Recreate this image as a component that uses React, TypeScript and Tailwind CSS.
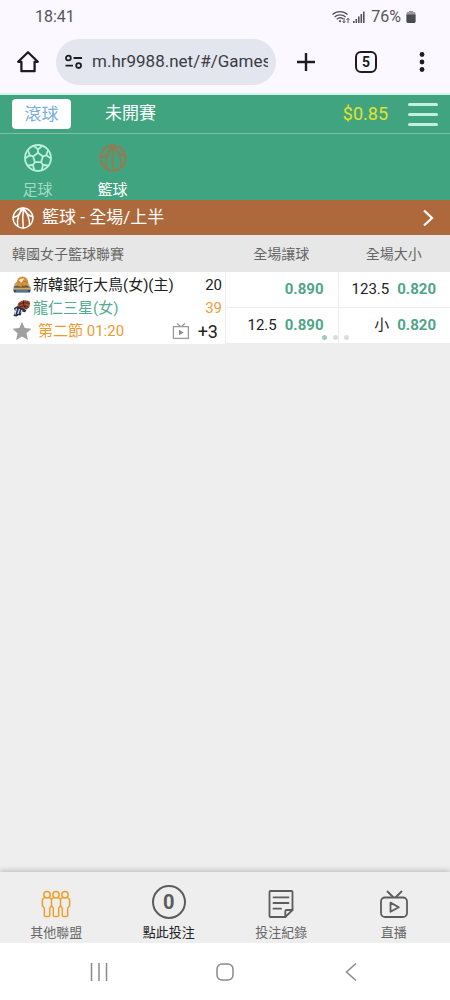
import { useState } from "react"
import type { ReactNode } from "react"

function HomeIcon() {
  return (
    <svg viewBox="0 0 24 24" className="w-6 h-6" fill="none" stroke="currentColor" strokeWidth="2.3" strokeLinejoin="round">
      <path d="M12 2.2 2.2 11.8h3.2v9.4h13.2v-9.4h3.2z" />
    </svg>
  )
}

function SiteInfoIcon() {
  return (
    <svg viewBox="0 0 20 16" className="w-5 h-4 shrink-0" fill="none" stroke="currentColor" strokeWidth="1.8">
      <circle cx="4.4" cy="4" r="2.4" />
      <path d="M9.5 4H18M1.5 11.6H9" />
      <circle cx="14.6" cy="11.6" r="2.4" />
    </svg>
  )
}

function WifiIcon() {
  return (
    <svg viewBox="0 0 20 16" className="w-5 h-4" fill="none" stroke="#55555a" strokeWidth="1.4">
      <path d="M1.5 5.6c4-4 11-4 15 0M3.6 8c3-2.8 8-2.8 11 0M5.8 10.3c1.8-1.6 4.6-1.6 6.3-.4" />
      <circle cx="9" cy="12.2" r="1.1" fill="#55555a" stroke="none" />
      <path d="M13 9v4.5M11.6 12.2l1.4 1.6 1.4-1.6M17 14V9.5M15.6 10.8 17 9.2l1.4 1.6" strokeWidth="1" />
    </svg>
  )
}

function SignalIcon() {
  return (
    <svg viewBox="0 0 12 14" className="w-3 h-4" fill="#55555a">
      <path d="M0 11h1.6v2H0zM2.5 9h1.6v4H2.5zM5 6.5h1.6V13H5zM7.5 4h1.6v9H7.5zM10 1.5h1.6V13H10z" />
    </svg>
  )
}

function BatteryIcon() {
  return (
    <svg viewBox="0 0 12 14" className="w-3 h-3.5">
      <path d="M4 1h4v2H4z" fill="#8d8d92" />
      <rect x="1.5" y="2" width="9" height="11" rx="1.4" fill="#9b9ba0" />
      <path d="M1.5 4.6h9v7A1.4 1.4 0 0 1 9.1 13H2.9a1.4 1.4 0 0 1-1.400-1.400z" fill="#4b4b50" />
    </svg>
  )
}

function FootballIcon({ className }: { className?: string }) {
  return (
    <svg viewBox="0 0 28 28" className={className} fill="none" stroke="currentColor" strokeWidth="1.8" strokeLinejoin="round">
      <circle cx="14" cy="14" r="13" />
      <path d="M14 8.8l4.9 3.6-1.8 5.8h-6.2l-1.8-5.8z" />
      <path d="M14 8.8V5.400M18.900 12.400l3.300-1.100M17.100 18.200l2 2.800M10.900 18.200l-2 2.800M9.100 12.400l-3.300-1.100" />
      <path d="M9.600 1.800L14 5.400l4.400-3.600M24.200 6l-2 5.300 4.800 3.200M24.800 21.300l-5.700-.3-1.500 5.500M10.400 26.500L8.900 21l-5.700.3M1 14.500l4.800-3.200L3.800 6" />
    </svg>
  )
}

function BasketballIcon({ className }: { className?: string }) {
  return (
    <svg viewBox="0 0 24 24" className={className} fill="none" stroke="currentColor" strokeLinecap="round">
      <circle cx="12" cy="12" r="10.8" />
      <path d="M12.5 1.5C11.6 8 11.4 16 12.3 22.6" />
      <path d="M12.5 1.5C7.5 6 5.2 13.5 6.3 21" />
      <path d="M12.5 1.5c4.3 5 6.800 11.500 6.600 18.600" />
      <path d="M1.400 11.400C6 10.500 9.300 7.500 10 1.600" />
      <path d="M12.500 1.500c2.500 5.300 6 8.200 10.200 9.200" />
    </svg>
  )
}

function EagleLogo() {
  return (
    <svg viewBox="0 0 20 18" className="w-5 h-5 shrink-0">
      <path d="M1.500 12c0-3 1.500-5.500 4-7L15 5l4 7z" fill="#b3a88f" />
      <circle cx="10.500" cy="6.400" r="5.800" fill="#dd9236" />
      <path d="M5.500 7c3-2.500 7-2.500 10.300 0M10.500 1.300c-1.300 3-1 7 .5 10" stroke="#a7621f" strokeWidth=".7" fill="none" />
      <path d="M7 4.500c1-1.800 3-2.500 5-1.800L9.500 7z" fill="#fdf0d0" />
      <path d="M2 10.500l3.500-1 3 1.200 3-1 3-.5 3.500 2-1 1H2z" fill="#6b5a44" />
      <path d="M1 11.800h18l-.6 1.800H1.600z" fill="#d9aa3a" />
      <path d="M1.200 13.400h17.600l-.8 3H2z" fill="#2b4a78" />
      <path d="M4 15h12" stroke="#8fadd0" strokeWidth=".8" />
    </svg>
  )
}

function SamsungLogo() {
  return (
    <svg viewBox="0 0 20 18" className="w-5 h-5 shrink-0">
      <path d="M6 4.500C8.500 1.500 13 .5 17.500 2.200c1.200 3.500 0 7-3.500 8.300-3 .7-7-1-8.500-3.500z" fill="#a4502f" />
      <path d="M7 5.500c3.500-2 7-2.300 10.500-1M11.500 1.600c-.5 3 .3 6 3 8.500M7.500 8c3.500-1.500 6-1.500 9 .3" stroke="#2b1c24" strokeWidth=".8" fill="none" />
      <path d="M2 9l3.500-2 4.500 2 4.500 2.500-1.500 1.700-3-.7-1.500 4-2-.3-2 1.300-3-.6 1.500-5z" fill="#26304e" />
      <path d="M4.500 9.500l-1.700 6M7.500 10l-1.700 5M10 11l-1 3" stroke="#dfe4ef" strokeWidth="1.200" />
    </svg>
  )
}

function StarIcon() {
  return (
    <svg viewBox="0 0 20 20" className="w-5 h-5" fill="#9f9f9f">
      <path d="M10 .8l2.700 6.300 6.800.6-5.100 4.500 1.500 6.700L10 15.400l-5.900 3.500 1.500-6.700L.5 7.700l6.800-.6z" />
    </svg>
  )
}

function TvIcon({ className }: { className?: string }) {
  return (
    <svg viewBox="0 0 28 28" className={className} fill="none" stroke="currentColor" strokeWidth="1.8" strokeLinecap="round" strokeLinejoin="round">
      <rect x="1" y="7.500" width="26" height="19.500" rx="4" />
      <path d="M7.500 1.500l5.500 5.500M21.500 1.500L16 7" />
      <path d="M10.500 12.600v9.200l8.300-4.600z" />
    </svg>
  )
}

function SmallTvIcon() {
  return (
    <svg viewBox="0 0 18 18" className="w-[18px] h-[18px]" fill="none" stroke="#9a9a9a" strokeWidth="1.3">
      <rect x="1.400" y="4.600" width="15" height="11.800" />
      <path d="M5 1.500l3.500 3M13 1.500l-3.500 3" />
      <path d="M7 7.800v5.400l4.600-2.700z" fill="#8a8a8a" stroke="none" />
    </svg>
  )
}

function PeopleIcon() {
  return (
    <svg viewBox="0 0 30 28" className="w-[30px] h-7" fill="none" stroke="#f0a02a" strokeWidth="1.5" strokeLinejoin="round">
      <circle cx="6" cy="4.800" r="3.200" />
      <circle cx="15" cy="4.800" r="3.200" />
      <circle cx="24" cy="4.800" r="3.200" />
      <path d="M3.500 7.500L1.400 9.300v6.500L3.300 18v7.600q0 1 1 1h3.400q1 0 1-1V18l1.800-2.200L12.300 18v7.600q0 1 1 1h3.400q1 0 1-1V18l1.800-2.200 1.800 2.200v7.600q0 1 1 1h3.400q1 0 1-1V18l1.900-2.200V9.300l-2.100-1.800" />
      <path d="M8.500 7.500l2 1.800v6.500M12.500 7.500l-2 1.800M17.500 7.500l2 1.800v6.500M21.500 7.500l-2 1.800" />
    </svg>
  )
}

function RecordIcon() {
  return (
    <svg viewBox="0 0 26 28" className="w-[26px] h-7" fill="none" stroke="currentColor" strokeWidth="1.8" strokeLinecap="round" strokeLinejoin="round">
      <path d="M2.500 1h21q1 0 1 1v18l-7.200 7H2.500q-1 0-1-1V2q0-1 1-1z" />
      <path d="M17.300 27v-5.500q0-1.500 1.500-1.500h5.700M5.500 7.300h15M5.500 13h15M5.500 18.700H13" />
    </svg>
  )
}

const odds = [
  { handicap: "", handicapOdds: "0.890", total: "123.5", totalOdds: "0.820" },
  { handicap: "12.5", handicapOdds: "0.890", total: "小", totalOdds: "0.820" },
]

function OddsCell({ label, value }: { label: string; value: string }) {
  return (
    <td className="border-l border-b border-[#ededed] p-0">
      <button className="flex w-full h-[35px] items-center justify-end gap-2 pr-3.5 text-[15px]">
        <span className="text-[#222]">{label}</span>
        <span className="font-bold text-[#4fa588]">{value}</span>
      </button>
    </td>
  )
}

function NavItem({ icon, label, active }: { icon: ReactNode; label: string; active?: boolean }) {
  return (
    <button className={`flex flex-1 flex-col items-center ${active ? "text-[#222]" : "text-[#666]"}`}>
      <span className="flex h-[38px] items-center text-[#5c5c5c]">{icon}</span>
      <span className="text-[13px] leading-5">{label}</span>
    </button>
  )
}

export default function App() {
  const [url, setUrl] = useState("m.hr9988.net/#/Games")

  return (
    <div className="min-h-screen flex flex-col bg-[#eeeeee] font-['Roboto','Noto_Sans_CJK_TC',sans-serif]">
      {/* Phone status bar */}
      <div className="flex h-[34px] items-center justify-between bg-[#fbf9ff] pl-[35px] pr-[33px] text-base text-[#55555a]">
        <span>18:41</span>
        <div className="flex items-center">
          <WifiIcon />
          <span className="pl-0.5 pr-1.5">
            <SignalIcon />
          </span>
          <span className="pr-1">76%</span>
          <BatteryIcon />
        </div>
      </div>

      {/* Browser toolbar */}
      <div className="flex h-[61px] items-center border-b-2 border-[#d3f3ea] bg-[#fbf9ff] pb-1 pr-4 text-[#1d1c22]">
        <button className="flex w-14 justify-center" aria-label="Home">
          <HomeIcon />
        </button>
        <label className="flex h-[46px] min-w-0 flex-1 items-center gap-2 rounded-full bg-[#e4e6ef] px-2">
          <SiteInfoIcon />
          <input
            className="min-w-0 flex-1 bg-transparent text-[17px] text-[#3b3c43] outline-none"
            aria-label="Address"
            value={url}
            onChange={(e) => setUrl(e.target.value)}
          />
        </label>
        <button className="flex w-[60px] justify-center" aria-label="New tab">
          <svg viewBox="0 0 20 20" className="w-5 h-5" stroke="currentColor" strokeWidth="2.4">
            <path d="M10 1v18M1 10h18" />
          </svg>
        </button>
        <button className="flex w-[60px] justify-center">
          <span className="flex h-[22px] w-[22px] items-center justify-center rounded-md border-2 border-[#1d1c22] text-sm font-bold leading-none">
            5
          </span>
        </button>
        <button className="ml-3.5 flex w-6 justify-center" aria-label="Menu">
          <svg viewBox="0 0 6 20" className="h-5 w-1.5" fill="currentColor">
            <circle cx="3" cy="2.500" r="2.400" />
            <circle cx="3" cy="10" r="2.400" />
            <circle cx="3" cy="17.500" r="2.400" />
          </svg>
        </button>
      </div>

      {/* Game header */}
      <header className="bg-[#41a481] text-white">
        <div className="flex h-[39px] items-center border-b border-[#7cc2a8] px-3">
          <button className="h-[30px] w-[59px] rounded-sm bg-white text-[17px] leading-none text-[#7aaede]">滾球</button>
          <button className="ml-[34px] text-[17px]">未開賽</button>
          <span className="ml-auto text-lg text-[#e2e22a]">$0.85</span>
          <button className="ml-5 flex w-[30px] flex-col gap-[7px]" aria-label="Open menu">
            <span className="h-[3px] w-full rounded-full bg-[#c3f0df]" />
            <span className="h-[3px] w-full rounded-full bg-[#c3f0df]" />
            <span className="h-[3px] w-full rounded-full bg-[#c3f0df]" />
          </button>
        </div>
        <nav className="flex h-[66px] pt-2.5 text-[15px] leading-5">
          <button className="flex w-[75px] flex-col items-center gap-2 text-[#a0dcc5]">
            <FootballIcon className="w-7 h-7 text-[#b9f0dc]" />
            <span>足球</span>
          </button>
          <button className="flex w-[75px] flex-col items-center gap-2">
            <BasketballIcon className="w-7 h-7 stroke-2 text-[#8a8058]" />
            <span>籃球</span>
          </button>
        </nav>
      </header>

      <button className="flex h-[35px] items-center gap-2 bg-[#ad693b] pl-3 pr-4 text-[17px] text-white">
        <BasketballIcon className="w-[22px] h-[22px] stroke-[1.6]" />
        <span>籃球 - 全場/上半</span>
        <svg viewBox="0 0 12 18" className="ml-auto w-3 h-[18px]" fill="none" stroke="currentColor" strokeWidth="2.2">
          <path d="M2 1.500l8 7.500-8 7.500" />
        </svg>
      </button>

      {/* Odds */}
      <div className="relative">
        <table className="w-full table-fixed border-separate border-spacing-0 bg-white">
          <thead className="bg-[#e7e7e7] text-sm text-[#666]">
            <tr className="h-[37px]">
              <th className="w-1/2 p-0 pl-3 text-left font-normal">韓國女子籃球聯賽</th>
              <th className="w-1/4 p-0 font-normal">全場讓球</th>
              <th className="w-1/4 p-0 font-normal">全場大小</th>
            </tr>
          </thead>
          <tbody>
            {odds.map((row, i) => (
              <tr key={i}>
                {i === 0 && (
                  <td rowSpan={2} className="p-0 pl-3 pr-[3px] text-[15px] leading-[23px] text-[#222]">
                    <div className="flex items-center">
                      <EagleLogo />
                      <span className="pl-px">新韓銀行大鳥(女)(主)</span>
                      <span className="ml-auto">20</span>
                    </div>
                    <div className="flex items-center">
                      <SamsungLogo />
                      <span className="pl-px text-[#55ac8e]">龍仁三星(女)</span>
                      <span className="ml-auto text-[#ee9d3c]">39</span>
                    </div>
                    <div className="flex items-center">
                      <button aria-label="Favorite">
                        <StarIcon />
                      </button>
                      <span className="pl-1.5 text-[#ee9a2e]">第二節 01:20</span>
                      <button className="ml-auto" aria-label="Live">
                        <SmallTvIcon />
                      </button>
                      <button className="pl-2 pr-1 text-lg leading-[23px]">+3</button>
                    </div>
                  </td>
                )}
                <OddsCell label={row.handicap} value={row.handicapOdds} />
                <OddsCell label={row.total} value={row.totalOdds} />
              </tr>
            ))}
          </tbody>
        </table>
        <div className="absolute bottom-1 left-1/2 right-0 flex justify-center gap-1.5 pr-1">
          <span className="h-[5px] w-[5px] rounded-full bg-[#9ccdbb]" />
          <span className="h-[5px] w-[5px] rounded-full bg-[#dadddf]" />
          <span className="h-[5px] w-[5px] rounded-full bg-[#dadddf]" />
        </div>
      </div>

      {/* Bottom navigation */}
      <nav className="mt-auto flex h-[71px] bg-[#eeeeee] pt-[13px] shadow-[0_-2px_5px_rgba(0,0,0,0.18)]">
        <NavItem icon={<PeopleIcon />} label="其他聯盟" />
        <NavItem
          icon={
            <span className="mb-1 flex h-[34px] w-[34px] items-center justify-center rounded-full border-2 border-[#5c5c5c] text-xl font-bold leading-none">
              0
            </span>
          }
          label="點此投注"
          active
        />
        <NavItem icon={<RecordIcon />} label="投注紀錄" />
        <NavItem icon={<TvIcon className="w-7 h-7" />} label="直播" />
      </nav>

      {/* Android buttons */}
      <div className="flex h-[57px] items-center justify-around bg-white px-9 text-[#8a8a8a]">
        <button aria-label="Recents">
          <svg viewBox="0 0 18 18" className="w-[18px] h-[18px]" stroke="currentColor" strokeWidth="1.500">
            <path d="M1.500 0v18M9 0v18M16.500 0v18" />
          </svg>
        </button>
        <button aria-label="Home screen">
          <svg viewBox="0 0 18 18" className="w-[18px] h-[18px]" fill="none" stroke="currentColor" strokeWidth="1.500">
            <rect x="1" y="1" width="16" height="16" rx="5" />
          </svg>
        </button>
        <button aria-label="Back">
          <svg viewBox="0 0 18 18" className="w-[18px] h-[18px]" fill="none" stroke="currentColor" strokeWidth="1.500">
            <path d="M14 .5L4.500 9l9.500 8.500" />
          </svg>
        </button>
      </div>
    </div>
  )
}
